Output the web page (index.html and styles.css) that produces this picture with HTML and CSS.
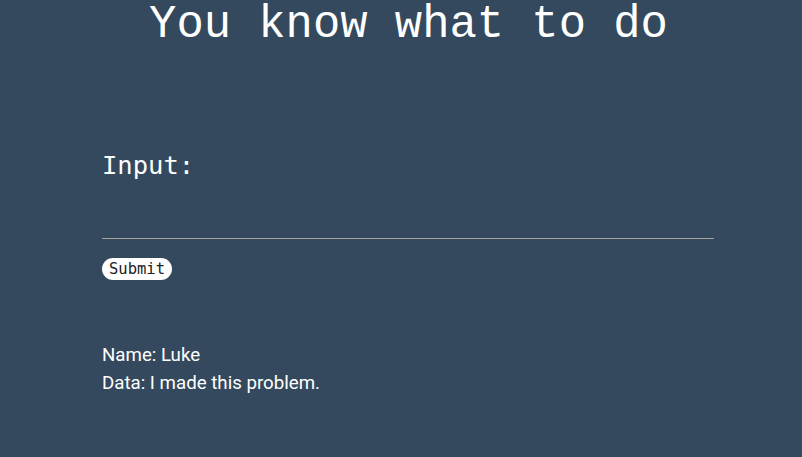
FILE: index.html
```html
<!DOCTYPE html>
<html>
<head>
<meta charset="utf-8">
<link rel="stylesheet" href="styles.css">
</head>
<body>
<h1 class="title">You know what to do</h1>
<main class="wrap">
  <form class="form">
    <label class="label" for="inp">Input:</label>
    <input class="field" id="inp" type="text">
    <button class="btn" type="button">Submit</button>
  </form>
  <div class="info">
    <p class="line">Name: Luke</p>
    <p class="line">Data: I made this problem.</p>
  </div>
</main>
</body>
</html>
```
FILE: styles.css
```css
html, body { margin: 0; padding: 0; }
body {
  background: #34495e;
  color: #fff;
  font-family: Roboto, sans-serif;
  height: 457px;
  overflow: hidden;
}
.title {
  margin: 0;
  padding: 0 0 0 15px;
  text-align: center;
  font-family: "Liberation Mono", monospace;
  font-weight: normal;
  font-size: 45.5px;
  line-height: 50px;
}
.wrap {
  width: 612px;
  margin-left: 102px;
}
.form {
  display: flex;
  flex-direction: column;
  align-items: flex-start;
  padding-top: 100px;
}
.label {
  font-family: "DejaVu Sans Mono", monospace;
  font-size: 25.5px;
  line-height: 30px;
}
.field {
  width: 100%;
  box-sizing: border-box;
  margin-top: 31px;
  height: 28px;
  background: transparent;
  border: none;
  border-bottom: 1px solid #a7a49f;
  color: #fff;
  outline: none;
}
.btn {
  margin-top: 19px;
  background: #fff;
  border: none;
  border-radius: 11px;
  font-family: "DejaVu Sans Mono", monospace;
  font-size: 15.5px;
  line-height: 20px;
  height: 22px;
  padding: 0 7px;
  color: #222;
}
.info {
  margin-top: 61px;
}
.line {
  margin: 0;
  font-size: 18.7px;
  line-height: 28px;
}
```
